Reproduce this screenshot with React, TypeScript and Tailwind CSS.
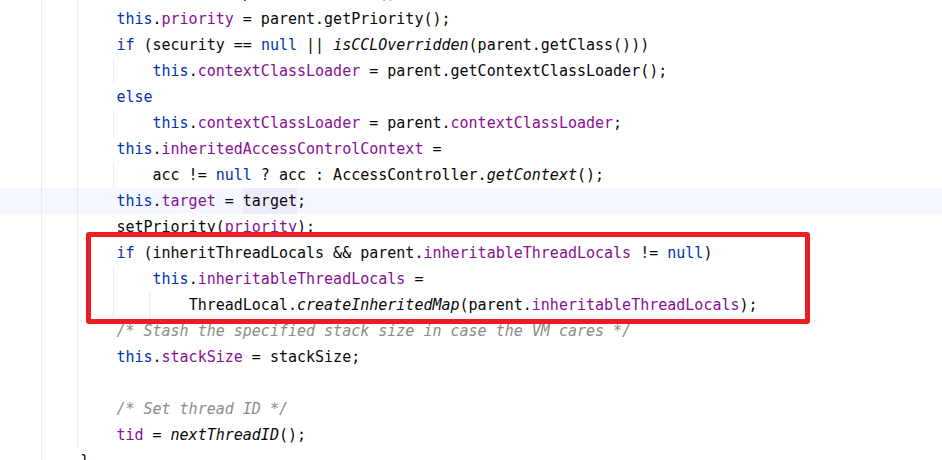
import React from 'react';

type Kind = 'p' | 'k' | 'f' | 'i' | 'c';
type Tok = [string, Kind];

const color: Record<Kind, string> = {
  p: 'text-[#080808]',
  k: 'text-[#0033b3]',
  f: 'text-[#871094]',
  i: 'text-[#080808] italic',
  c: 'text-[#8c8c8c] italic',
};

const I1 = '            ';
const I2 = '                ';
const I3 = '                    ';

interface Line {
  toks: Tok[];
  guides: number[];
  current?: boolean;
}

const base = [41, 77];

const lines: Line[] = [
  { toks: [[I1, 'p'], ['this', 'k'], ['.', 'p'], ['daemon', 'f'], [' = parent.isDaemon();', 'p']], guides: base },
  { toks: [[I1, 'p'], ['this', 'k'], ['.', 'p'], ['priority', 'f'], [' = parent.getPriority();', 'p']], guides: base },
  {
    toks: [[I1, 'p'], ['if', 'k'], [' (security == ', 'p'], ['null', 'k'], [' || ', 'p'], ['isCCLOverridden', 'i'], ['(parent.getClass()))', 'p']],
    guides: base,
  },
  {
    toks: [[I2, 'p'], ['this', 'k'], ['.', 'p'], ['contextClassLoader', 'f'], [' = parent.getContextClassLoader();', 'p']],
    guides: [...base, 113],
  },
  { toks: [[I1, 'p'], ['else', 'k']], guides: base },
  {
    toks: [[I2, 'p'], ['this', 'k'], ['.', 'p'], ['contextClassLoader', 'f'], [' = parent.', 'p'], ['contextClassLoader', 'f'], [';', 'p']],
    guides: [...base, 113],
  },
  { toks: [[I1, 'p'], ['this', 'k'], ['.', 'p'], ['inheritedAccessControlContext', 'f'], [' =', 'p']], guides: base },
  {
    toks: [[I2, 'p'], ['acc != ', 'p'], ['null', 'k'], [' ? acc : AccessController.', 'p'], ['getContext', 'i'], ['();', 'p']],
    guides: [...base, 113],
  },
  { toks: [[I1, 'p'], ['this', 'k'], ['.', 'p'], ['target', 'f'], [' = ', 'p']], guides: base, current: true },
  { toks: [[I1, 'p'], ['setPriority(', 'p'], ['priority', 'f'], [');', 'p']], guides: base },
  {
    toks: [[I1, 'p'], ['if', 'k'], [' (inheritThreadLocals && parent.', 'p'], ['inheritableThreadLocals', 'f'], [' != ', 'p'], ['null', 'k'], [')', 'p']],
    guides: base,
  },
  { toks: [[I2, 'p'], ['this', 'k'], ['.', 'p'], ['inheritableThreadLocals', 'f'], [' =', 'p']], guides: [...base, 113] },
  {
    toks: [[I3, 'p'], ['ThreadLocal.', 'p'], ['createInheritedMap', 'i'], ['(parent.', 'p'], ['inheritableThreadLocals', 'f'], [');', 'p']],
    guides: [...base, 113, 149],
  },
  { toks: [[I1, 'p'], ['/* Stash the specified stack size in case the VM cares */', 'c']], guides: base },
  { toks: [[I1, 'p'], ['this', 'k'], ['.', 'p'], ['stackSize', 'f'], [' = stackSize;', 'p']], guides: base },
  { toks: [], guides: base },
  { toks: [[I1, 'p'], ['/* Set thread ID */', 'c']], guides: base },
  { toks: [[I1, 'p'], ['tid', 'f'], [' = ', 'p'], ['nextThreadID', 'i'], ['();', 'p']], guides: base },
  { toks: [['        ', 'p'], ['}', 'p']], guides: [41] },
];

function CodeLine({ line }: { line: Line }) {
  return (
    <div className={`relative h-[26px] ${line.current ? 'bg-[#f5f8fe]' : ''}`}>
      {line.guides.map((x) => (
        <span key={x} className="absolute top-0 h-full w-px bg-[#ebebeb]" style={{ left: x }} />
      ))}
      <div className="relative flex h-full items-start whitespace-pre pl-[8px] pt-[3px] leading-[20px]">
        {line.toks.map(([t, k], i) => (
          <span key={i} className={color[k]}>
            {t}
          </span>
        ))}
        {line.current && (
          <>
            <span className="-mt-[3px] h-[26px] bg-[#edebfc] pt-[3px] text-[#080808]">target</span>
            <span className="text-[#080808]">;</span>
          </>
        )}
      </div>
    </div>
  );
}

export default function App() {
  return (
    <div className="relative h-[460px] w-[942px] overflow-hidden bg-white font-['DejaVu_Sans_Mono',monospace] text-[15px]">
      <div className="-mt-[20px] flex flex-col">
        {lines.map((l, i) => (
          <CodeLine key={i} line={l} />
        ))}
      </div>
      <div className="absolute left-[86px] top-[232px] h-[92px] w-[724px] rounded-[3px] border-[5px] border-[#ec1c24]" />
    </div>
  );
}
